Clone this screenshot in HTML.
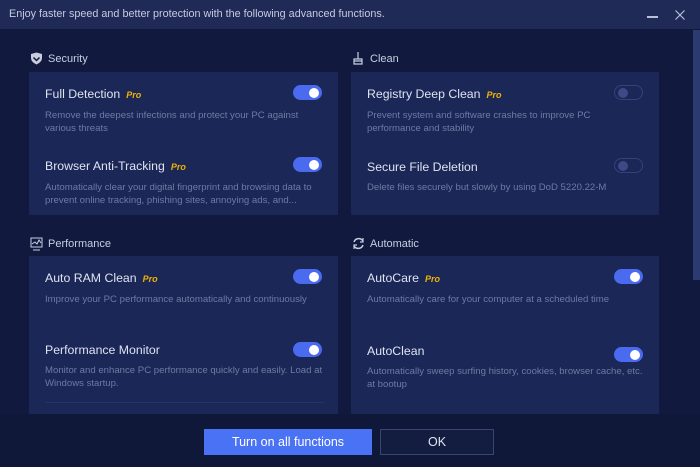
<!DOCTYPE html>
<html><head><meta charset="utf-8"><style>
*{margin:0;padding:0;box-sizing:border-box}
body{width:700px;height:467px;background:#111a3e;font-family:"Liberation Sans",sans-serif;position:relative;overflow:hidden}
.tb{position:absolute;left:0;top:0;width:700px;height:29px;background:#1f2a57;color:#c5cbe0;font-size:10.8px;line-height:29px;padding-left:9px}
.sb{position:absolute;left:693px;top:30px;width:7px;height:250px;background:#2b3a6f}
.hd{position:absolute;color:#c8cde0;font-size:11px;height:14px;line-height:14px}
.hd svg{position:absolute;left:-18px;top:0}
.card{position:absolute;background:#1b2757}
.it{position:absolute;left:16px;right:14px}
.t{color:#dfe3f0;font-size:12.3px;line-height:16px}
.pro{color:#f0b400;font-size:9px;font-style:italic;font-weight:bold;margin-left:6px}
.d{color:#6f7aa3;font-size:9.6px;line-height:13px;margin-top:6px}
.tg{position:absolute;right:16px;width:29px;height:15px;border-radius:8px;background:#4a6af0}
.tg:after{content:"";position:absolute;right:3px;top:2.5px;width:10px;height:10px;border-radius:5px;background:#fff}
.tg.off{background:#1b2757;border:1px solid #34427a}
.tg.off:after{left:3px;top:2px;background:#3d4a85}
.foot{position:absolute;left:0;top:414px;width:700px;height:53px;background:#0f1838}
.b1{position:absolute;left:204px;top:429px;width:168px;height:26px;background:#4a72f5;color:#fff;font-size:12.5px;text-align:center;line-height:26px}
.b2{position:absolute;left:380px;top:429px;width:114px;height:26px;background:#131d40;border:1px solid #3a4670;color:#dfe3f0;font-size:12.5px;text-align:center;line-height:24px}
</style></head><body>
<div class="tb">Enjoy faster speed and better protection with the following advanced functions.
<span style="position:absolute;left:647px;top:16px;width:11px;height:1.5px;background:#b8c0dc"></span>
<svg style="position:absolute;left:675px;top:10px" width="10" height="10" viewBox="0 0 10 10"><path d="M0.5 0.5L9.5 9.5M9.5 0.5L0.5 9.5" stroke="#b8c0dc" stroke-width="1.2"/></svg></div>
<div class="sb"></div>

<div class="hd" style="left:48px;top:52px">
<svg width="13" height="13" viewBox="0 0 13 13"><path d="M1 2 L6.5 0.5 L12 2 L12 6 Q12 10 6.5 12.5 Q1 10 1 6Z" fill="#c8cde0"/><path d="M3.5 5.5 L6.5 8.5 L9.5 5.5" stroke="#111a3e" stroke-width="1.5" fill="none"/></svg>Security</div>
<div class="hd" style="left:370px;top:52px">
<svg width="13" height="13" viewBox="0 0 13 13"><path d="M6 0v7M2 7h8v2H2zM2 9h8v3H2z" stroke="#c8cde0" stroke-width="1.2" fill="none"/></svg>Clean</div>
<div class="hd" style="left:48px;top:237px">
<svg width="13" height="14" viewBox="0 0 13 14"><rect x="1" y="1" width="11" height="9" stroke="#c8cde0" fill="none"/><path d="M2 7l3-2 2 2 2-4 2 3M3 13h7" stroke="#c8cde0" fill="none"/></svg>Performance</div>
<div class="hd" style="left:370px;top:237px">
<svg width="13" height="13" viewBox="0 0 13 13"><path d="M2 5A5 5 0 0 1 11 4M11 8A5 5 0 0 1 2 9" stroke="#c8cde0" stroke-width="1.5" fill="none"/><path d="M11 1v4h-3M2 12V8h3" stroke="#c8cde0" stroke-width="1.2" fill="none"/></svg>Automatic</div>

<div class="card" style="left:29px;top:72px;width:309px;height:143px">
<div class="it" style="top:14px"><div class="t">Full Detection<span class="pro">Pro</span></div><div class="d">Remove the deepest infections and protect your PC against various threats</div></div>
<div class="tg" style="top:13px"></div>
<div class="it" style="top:86px"><div class="t">Browser Anti-Tracking<span class="pro">Pro</span></div><div class="d">Automatically clear your digital fingerprint and browsing data to prevent online tracking, phishing sites, annoying ads, and...</div></div>
<div class="tg" style="top:85px"></div>
</div>
<div class="card" style="left:351px;top:72px;width:308px;height:143px">
<div class="it" style="top:14px"><div class="t">Registry Deep Clean<span class="pro">Pro</span></div><div class="d">Prevent system and software crashes to improve PC performance and stability</div></div>
<div class="tg off" style="top:13px"></div>
<div class="it" style="top:87px"><div class="t">Secure File Deletion</div><div class="d">Delete files securely but slowly by using DoD 5220.22-M</div></div>
<div class="tg off" style="top:86px"></div>
</div>
<div class="card" style="left:29px;top:256px;width:309px;height:158px">
<div class="it" style="top:14px"><div class="t">Auto RAM Clean<span class="pro">Pro</span></div><div class="d">Improve your PC performance automatically and continuously</div></div>
<div class="tg" style="top:13px"></div>
<div class="it" style="top:86px"><div class="t">Performance Monitor</div><div class="d">Monitor and enhance PC performance quickly and easily. Load at Windows startup.</div></div>
<div class="tg" style="top:86px"></div>
<div style="position:absolute;left:16px;right:14px;top:146px;height:1px;background:#26326a"></div>
</div>
<div class="card" style="left:351px;top:256px;width:308px;height:158px">
<div class="it" style="top:14px"><div class="t">AutoCare<span class="pro">Pro</span></div><div class="d">Automatically care for your computer at a scheduled time</div></div>
<div class="tg" style="top:13px"></div>
<div class="it" style="top:87px"><div class="t">AutoClean</div><div class="d">Automatically sweep surfing history, cookies, browser cache, etc. at bootup</div></div>
<div class="tg" style="top:91px"></div>
</div>

<div class="foot"></div>
<div class="b1">Turn on all functions</div>
<div class="b2">OK</div>
</body></html>
